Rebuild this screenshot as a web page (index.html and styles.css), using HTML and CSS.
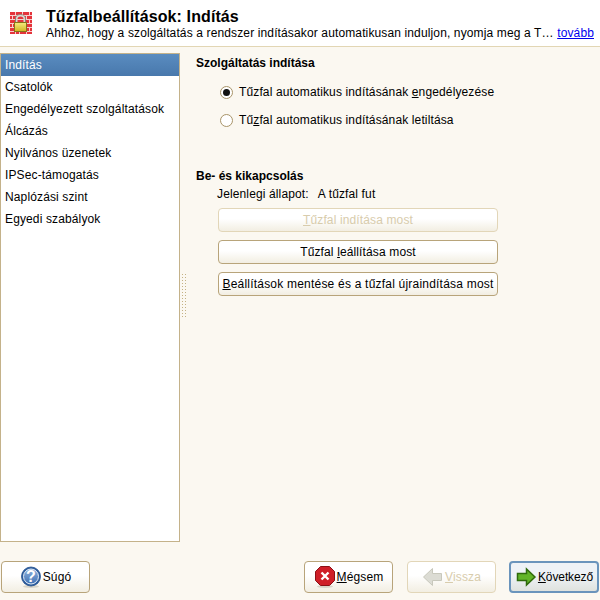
FILE: index.html
```html
<!DOCTYPE html>
<html lang="hu">
<head>
<meta charset="utf-8">
<title>Tűzfalbeállítások: Indítás</title>
<link rel="stylesheet" href="styles.css">
</head>
<body>
<div class="app">
  <header class="header">
    <svg class="logo" width="24" height="24" viewBox="0 0 24 24">
      <defs>
        <linearGradient id="lockbody" x1="0" y1="0" x2="0" y2="1"><stop offset="0" stop-color="#f6ea80"/><stop offset="1" stop-color="#d0b420"/></linearGradient>
      </defs>
      <rect x="0" y="1" width="22" height="22" fill="#e4333b"/>
      <g stroke="#f7cfcf" stroke-width="1" fill="none">
        <path d="M0 4.500h22M0 8.500h22M0 12.500h22M0 16.500h22M0 20.500h22"/>
        <path d="M5.500 1v3.500M12.500 1v3.500M19.500 1v3.500M2.500 5v3.500M16.500 5v3.500M19.500 9v3.500M2.500 13v3.500M19.500 17v3.500M5.500 21v2M9.500 21v2M16.500 21v2"/>
      </g>
      <path d="M6.500 11V8C6.500 5.500 8.500 4.500 10.500 4.500S14.500 5.500 14.500 8V11" fill="none" stroke="#d8d8d0" stroke-width="2"/>
      <path d="M5.500 11V8C5.500 4.500 8 3.500 10.500 3.500S15.500 4.500 15.500 8V11" fill="none" stroke="#7c7c70" stroke-width=".8"/>
      <rect x="4.500" y="11.500" width="12" height="9" fill="url(#lockbody)" stroke="#86741a"/>
    </svg>
    <div class="header-text">
      <h1 class="title">Tűzfalbeállítások: Indítás</h1>
      <div class="subtitle">
        <span class="subtitle-text">Ahhoz, hogy a szolgáltatás a rendszer indításakor automatikusan induljon, nyomja meg a T…</span>
        <a class="more" href="#">tovább</a>
      </div>
    </div>
  </header>
  <main class="main">
    <ul class="nav">
      <li class="nav-item selected">Indítás</li>
      <li class="nav-item">Csatolók</li>
      <li class="nav-item">Engedélyezett szolgáltatások</li>
      <li class="nav-item">Álcázás</li>
      <li class="nav-item">Nyilvános üzenetek</li>
      <li class="nav-item">IPSec-támogatás</li>
      <li class="nav-item">Naplózási szint</li>
      <li class="nav-item">Egyedi szabályok</li>
    </ul>
    <div class="grip"></div>
    <section class="content">
      <h2 class="group-title">Szolgáltatás indítása</h2>
      <div class="radios">
        <label class="radio"><span class="radio-mark on"></span><span>Tűzfal automatikus indításának <u>e</u>ngedélyezése</span></label>
        <label class="radio"><span class="radio-mark"></span><span>Tű<u>z</u>fal automatikus indításának letiltása</span></label>
      </div>
      <h2 class="group-title second">Be- és kikapcsolás</h2>
      <div class="status"><span>Jelenlegi állapot:</span><span>A tűzfal fut</span></div>
      <div class="actions">
        <button class="btn action disabled" type="button"><span><u>T</u>űzfal indítása most</span></button>
        <button class="btn action" type="button"><span>Tűzfal <u>l</u>eállítása most</span></button>
        <button class="btn action wide-label" type="button"><span><u>B</u>eállítások mentése és a tűzfal újraindítása most</span></button>
      </div>
    </section>
  </main>
  <footer class="footer">
    <button class="btn foot" type="button">
      <svg width="22" height="22" viewBox="0 0 22 22">
        <defs><linearGradient id="helpfill" x1="0" y1="0" x2="0" y2="1"><stop offset="0" stop-color="#8fb2dc"/><stop offset="1" stop-color="#3f70b4"/></linearGradient></defs>
        <ellipse cx="11" cy="20.500" rx="8" ry="1.500" fill="#d8d4c8"/>
        <circle cx="11" cy="10.500" r="9.500" fill="#2f5f9f" stroke="#1f4c8c" stroke-width=".8"/>
        <circle cx="11" cy="10.500" r="7.500" fill="url(#helpfill)" stroke="#e4ecf6"/>
        <text class="q" x="11" y="16" text-anchor="middle">?</text>
      </svg>
      <span>Súgó</span>
    </button>
    <div class="foot-right">
      <button class="btn foot" type="button">
        <svg width="22" height="22" viewBox="0 0 22 22">
          <ellipse cx="11" cy="20.500" rx="8" ry="1.500" fill="#d8d4c8"/>
          <path d="M6.500 .5h9l5 5v9l-5 5h-9l-5-5v-9z" fill="#cf1f28" stroke="#8c1016"/>
          <path d="M7.500 6.500l7 7M14.500 6.500l-7 7" stroke="#fff" stroke-width="2.400"/>
        </svg>
        <span><u>M</u>égsem</span>
      </button>
      <button class="btn foot disabled" type="button">
        <svg width="22" height="22" viewBox="0 0 22 22"><path d="M1.500 11l9-8.500v5h9v7h-9v5z" fill="#dcdcd4" stroke="#c8c8bc"/></svg>
        <span><u>V</u>issza</span>
      </button>
      <button class="btn foot primary" type="button">
        <svg width="22" height="22" viewBox="0 0 22 22"><path d="M20 11l-8.500-8v4.500h-9v7h9V19z" fill="#62b428" stroke="#2f6a0c" stroke-width="1.500"/></svg>
        <span><u>K</u>övetkező</span>
      </button>
    </div>
  </footer>
</div>
</body>
</html>
```
FILE: styles.css
```css
* { box-sizing: border-box; }
html, body { margin: 0; padding: 0; }
body { background: #fbf8f1; font: 12px/14px "Liberation Sans", Arial, sans-serif; color: #000; letter-spacing: .13px; }
.app { width: 600px; height: 600px; display: flex; flex-direction: column; overflow: hidden; }
.header { height: 47px; background: #fff; border-bottom: 1px solid #e2d6b4; display: flex; padding: 10px 0 0 10px; gap: 12px; flex: none; }
.logo { flex: none; margin-top: 1px; }
.header-text { flex: 1; min-width: 0; padding-right: 6px; }
.title { margin: 0; font-size: 16px; line-height: 17px; font-weight: bold; letter-spacing: .1px; margin-top: -2px; }
.subtitle { display: flex; justify-content: space-between; margin-top: 1px; line-height: 14px; }
.subtitle-text { white-space: nowrap; }
.more { color: #0000ee; text-decoration: underline; }
.main { flex: 1; display: flex; padding-top: 6px; min-height: 0; }
.nav { list-style: none; margin: 0; padding: 0; width: 180px; height: 489px; background: #fff; border: 1px solid #c4b28a; flex: none; }
.nav-item { height: 22px; line-height: 22px; padding-left: 4px; }
.selected { background: linear-gradient(#5a8cc0, #4878ac); color: #fff; }
.grip { width: 4px; height: 45px; margin: 221px 0 0 2px; flex: none; background: conic-gradient(from 270deg at 1px 1px, #c4b284 25%, transparent 0) 0 0 / 3px 3px; }
.content { flex: 1; padding: 3px 0 0 10px; min-width: 0; }
.group-title { margin: 0; font-size: 12px; line-height: 14px; font-weight: bold; letter-spacing: 0; }
.radios { display: flex; flex-direction: column; gap: 14px; padding: 15px 0 0 24px; }
.radio { display: flex; align-items: center; gap: 6px; height: 14px; }
.radio-mark { width: 13px; height: 13px; border-radius: 50%; border: 1px solid #a89468; background: #fff; display: flex; align-items: center; justify-content: center; }
.radio-mark.on::after { content: ""; width: 7px; height: 7px; border-radius: 50%; background: #111; }
.second { margin-top: 42px; }
.status { display: flex; gap: 9px; padding: 4px 0 0 21px; }
.actions { display: flex; flex-direction: column; gap: 8px; padding: 7px 0 0 22px; }
.btn { font: inherit; letter-spacing: inherit; color: #000; border: 1px solid #b8a47a; border-radius: 4px; background: linear-gradient(#fff 0 45%, #f2eee2); padding: 0; display: flex; align-items: center; justify-content: center; }
.action { height: 24px; width: 280px; white-space: nowrap; }
.wide-label { letter-spacing: .21px; }
.disabled { color: #d8ccac; border-color: #e2d6b8; }
.footer { height: 58px; flex: none; display: flex; justify-content: space-between; padding: 19px 1px 0 1px; }
.foot-right { display: flex; gap: 14px; }
.foot { width: 89px; height: 32px; gap: 1px; }
.primary { border: 2px solid #6a94bc; width: 90px; margin-left: -1px; letter-spacing: -.1px; background: linear-gradient(#eef2f6 0 45%, #dfe2de); }
.q { font: bold 16px "Liberation Sans", sans-serif; fill: #fff; }
```
